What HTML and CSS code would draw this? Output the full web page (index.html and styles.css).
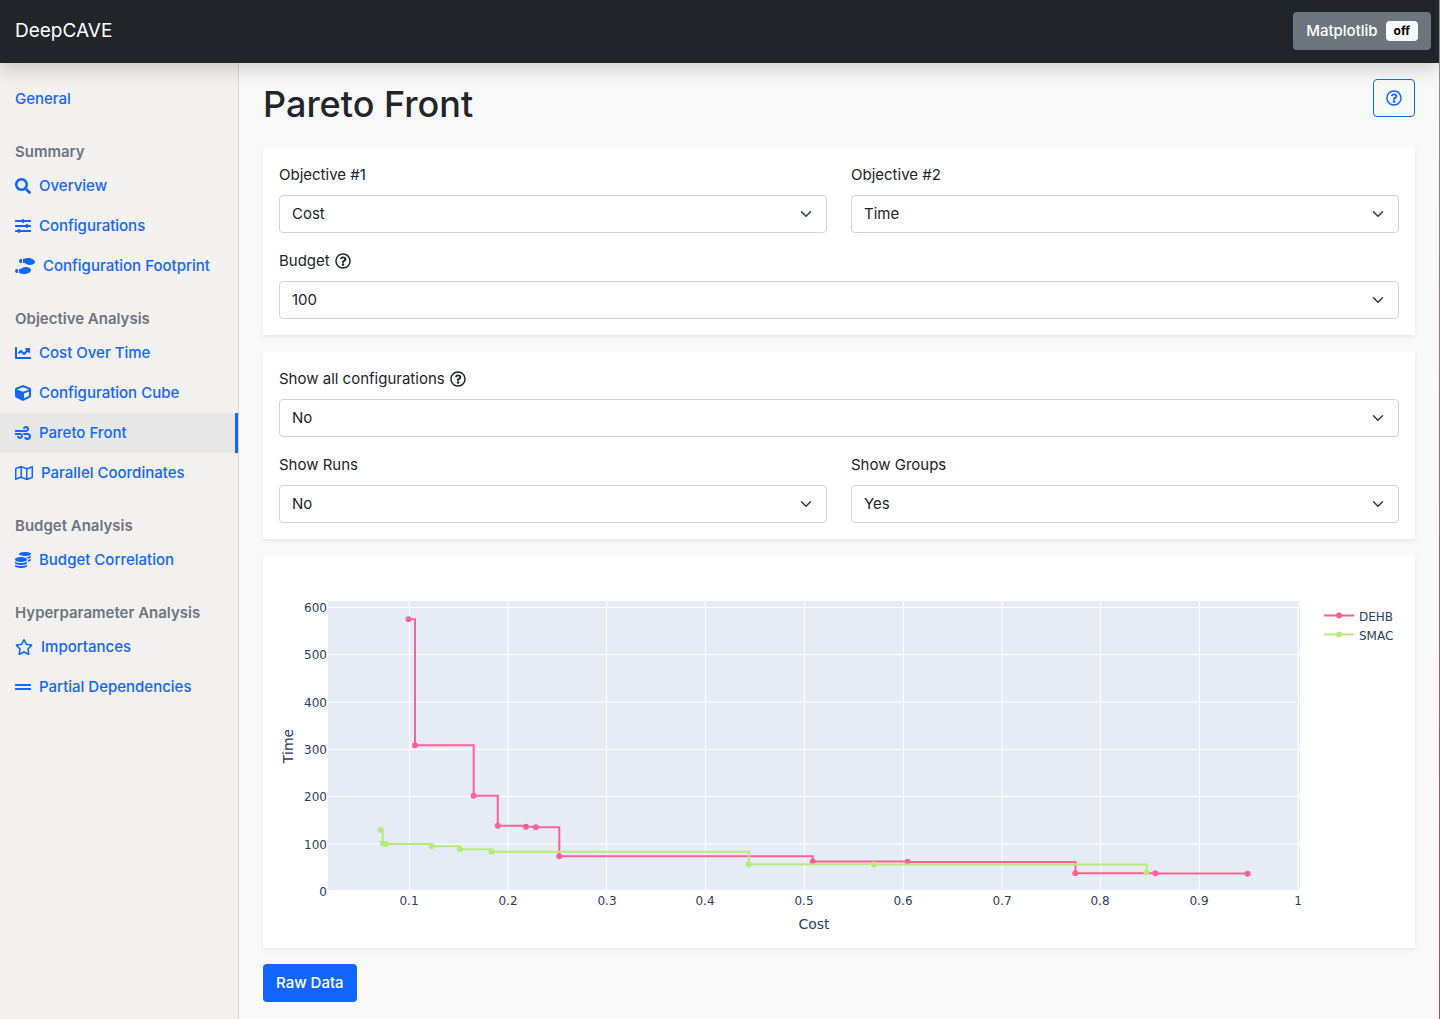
FILE: index.html
```html
<!DOCTYPE html>
<html lang="en">
<head>
<meta charset="utf-8">
<title>DeepCAVE</title>
<meta name="viewport" content="width=device-width, initial-scale=1">
<link rel="stylesheet" href="styles.css">
</head>
<body>
<svg class="sprite" aria-hidden="true">
  <symbol id="i-search" viewBox="0 0 512 512"><path d="M505 442.7L405.3 343c-4.5-4.5-10.6-7-17-7H372c27.6-35.3 44-79.7 44-128C416 93.1 322.9 0 208 0S0 93.1 0 208s93.1 208 208 208c48.3 0 92.7-16.4 128-44v16.3c0 6.4 2.5 12.5 7 17l99.7 99.7c9.4 9.4 24.6 9.4 33.9 0l28.3-28.3c9.4-9.4 9.4-24.6.1-34zM208 336c-70.7 0-128-57.2-128-128 0-70.7 57.2-128 128-128 70.7 0 128 57.2 128 128 0 70.7-57.2 128-128 128z"/></symbol>
  <symbol id="i-sliders" viewBox="0 0 512 512"><path d="M496 384H160v-16c0-8.8-7.2-16-16-16h-32c-8.8 0-16 7.2-16 16v16H16c-8.8 0-16 7.2-16 16v32c0 8.8 7.2 16 16 16h80v16c0 8.8 7.2 16 16 16h32c8.8 0 16-7.2 16-16v-16h336c8.8 0 16-7.2 16-16v-32c0-8.8-7.2-16-16-16zm0-160h-80v-16c0-8.8-7.2-16-16-16h-32c-8.8 0-16 7.2-16 16v16H16c-8.8 0-16 7.2-16 16v32c0 8.8 7.2 16 16 16h336v16c0 8.8 7.2 16 16 16h32c8.8 0 16-7.2 16-16v-16h80c8.8 0 16-7.2 16-16v-32c0-8.8-7.2-16-16-16zm0-160H288V48c0-8.8-7.2-16-16-16h-32c-8.8 0-16 7.2-16 16v16H16C7.2 64 0 71.2 0 80v32c0 8.8 7.2 16 16 16h208v16c0 8.8 7.2 16 16 16h32c8.8 0 16-7.2 16-16v-16h208c8.8 0 16-7.2 16-16V80c0-8.8-7.2-16-16-16z"/></symbol>
  <symbol id="i-shoe-prints" viewBox="0 0 640 512"><path d="M192 160h32V32h-32c-35.35 0-64 28.65-64 64s28.65 64 64 64zM0 416c0 35.35 28.65 64 64 64h32V352H64c-35.35 0-64 28.65-64 64zm337.46-128c-34.91 0-76.16 13.12-104.73 32-24.79 16.38-44.52 32-104.73 32v128l57.53 15.97c26.21 7.28 53.01 13.12 80.31 15.05 32.69 2.31 65.6.67 97.58-6.2C472.9 481.3 512 429.22 512 384c0-64-84.18-96-174.54-96zM491.42 7.25C459.44.32 426.53-1.33 393.84.99c-27.3 1.93-54.1 7.77-80.31 15.04L256 32v128c60.2 0 79.94 15.62 104.73 32 28.57 18.88 69.82 32 104.73 32C555.82 224 640 192 640 128c0-45.22-39.1-97.3-148.58-120.75z"/></symbol>
  <symbol id="i-chart-line" viewBox="0 0 512 512"><path d="M496 384H64V80c0-8.84-7.16-16-16-16H16C7.16 64 0 71.16 0 80v336c0 17.67 14.33 32 32 32h464c8.84 0 16-7.16 16-16v-32c0-8.84-7.16-16-16-16zM464 96H345.94c-21.38 0-32.09 25.85-16.97 40.97l32.4 32.4L288 242.75l-73.37-73.37c-12.5-12.5-32.76-12.5-45.25 0l-68.69 68.69c-6.25 6.25-6.25 16.38 0 22.63l22.62 22.62c6.25 6.25 16.38 6.25 22.63 0L192 237.25l73.37 73.37c12.5 12.5 32.76 12.5 45.25 0l96-96 32.4 32.4c15.12 15.12 40.97 4.41 40.97-16.97V112c.01-8.84-7.15-16-15.99-16z"/></symbol>
  <symbol id="i-cube" viewBox="0 0 512 512"><path d="M239.1 6.3l-208 78c-18.7 7-31.1 25-31.1 45v225.1c0 18.2 10.3 34.8 26.5 42.9l208 104c13.5 6.8 29.4 6.8 42.9 0l208-104c16.3-8.1 26.5-24.8 26.5-42.9V129.3c0-20-12.4-37.9-31.1-44.9l-208-78C262 2.2 250 2.2 239.1 6.3zM256 68.4l192 72v1.1l-192 78-192-78v-1.1l192-72zm32 356V275.5l160-65v133.9l-160 80z"/></symbol>
  <symbol id="i-wind" viewBox="0 0 512 512"><path d="M156.7 256H16c-8.8 0-16 7.2-16 16v32c0 8.8 7.2 16 16 16h142.2c15.9 0 30.8 10.9 33.4 26.6 3.3 20-12.1 37.4-31.6 37.4-14.1 0-26.1-9.2-30.4-21.9-2.1-6.3-8.6-10.1-15.2-10.1H81.6c-9.8 0-17.7 8.8-15.9 18.4 8.6 44.1 47.6 77.6 94.2 77.6 57.1 0 102.7-50.1 95.2-108.6C249 291 205.4 256 156.7 256zM16 224h336c59.7 0 106.8-54.8 93.8-116.7-7.6-36.2-36.9-65.5-73.1-73.1-55.4-11.6-105.1 24.9-114.9 75.5-1.9 9.6 6.1 18.3 15.8 18.3h32.8c6.7 0 13.1-3.8 15.2-10.1C325.9 105.2 337.9 96 352 96c19.4 0 34.9 17.4 31.6 37.4-2.6 15.7-17.4 26.6-33.4 26.6H16c-8.8 0-16 7.2-16 16v32c0 8.8 7.2 16 16 16zm384 32H243.7c19.3 16.6 33.2 38.8 39.8 64H400c26.5 0 48 21.5 48 48s-21.5 48-48 48c-17.9 0-33.3-9.9-41.6-24.4-2.9-5-8.7-7.6-14.5-7.6h-33.8c-10.9 0-19 10.8-15.3 21.1 17.8 50.6 70.5 84.8 129.4 72.3 41.2-8.7 75.1-41.6 84.7-82.7C526 321.5 470.5 256 400 256z"/></symbol>
  <symbol id="i-map" viewBox="0 0 576 512"><path d="M560.02 32c-1.96 0-3.98.37-5.96 1.16L384.01 96H384L212 35.28A64.252 64.252 0 0 0 191.76 32c-6.69 0-13.37 1.05-19.81 3.14L20.12 87.95A32.006 32.006 0 0 0 0 117.66v346.32C0 473.17 7.53 480 15.99 480c1.96 0 3.97-.37 5.96-1.16L192 416l172 60.71a63.98 63.98 0 0 0 40.05.15l151.83-52.81A31.996 31.996 0 0 0 576 394.34V48.02c0-9.19-7.53-16.02-15.98-16.02zM224 90.42l128 45.19v285.97l-128-45.19V90.42zM48 418.05V129.07l128-44.53v286.2l-.64.23L48 418.05zm480-35.13l-128 44.53V141.26l.64-.24L528 93.95v288.97z"/></symbol>
  <symbol id="i-coins" viewBox="0 0 512 512"><path d="M0 405.3V448c0 35.3 86 64 192 64s192-28.7 192-64v-42.7C342.7 434.4 267.2 448 192 448S41.3 434.4 0 405.3zM320 128c106 0 192-28.7 192-64S426 0 320 0 128 28.7 128 64s86 64 192 64zM0 300.4V352c0 35.3 86 64 192 64s192-28.7 192-64v-51.6c-41.3 34-116.9 51.6-192 51.6S41.3 334.4 0 300.4zm416 11c57.3-11.1 96-31.7 96-55.4v-42.7c-23.2 16.4-57.3 27.6-96 34.5v63.6zM192 160C86 160 0 195.8 0 240s86 80 192 80 192-35.8 192-80-86-80-192-80zm219.3 56.3c60-10.8 100.7-32 100.7-56.3v-42.7c-35.5 25.1-96.5 38.6-160.7 41.8 29.5 14.3 51.2 33.5 60 57.2z"/></symbol>
  <symbol id="i-star" viewBox="0 0 576 512"><path d="M528.1 171.5L382 150.2 316.7 17.8c-11.7-23.6-45.6-23.9-57.4 0L194 150.2 47.9 171.5c-26.2 3.8-36.7 36.1-17.7 54.6l105.7 103-25 145.5c-4.5 26.3 23.2 46 46.4 33.7L288 439.6l130.7 68.7c23.2 12.2 50.9-7.4 46.4-33.7l-25-145.5 105.7-103c19-18.5 8.5-50.8-17.7-54.6zM388.6 312.3l23.7 138.4L288 385.4l-124.3 65.3 23.7-138.4-100.6-98 139-20.2 62.2-126 62.2 126 139 20.2-100.6 98z"/></symbol>
  <symbol id="i-grip-lines" viewBox="0 0 512 512"><path d="M496 288H16c-8.8 0-16 7.2-16 16v32c0 8.8 7.2 16 16 16h480c8.8 0 16-7.2 16-16v-32c0-8.8-7.2-16-16-16zm0-128H16c-8.8 0-16 7.2-16 16v32c0 8.8 7.2 16 16 16h480c8.8 0 16-7.2 16-16v-32c0-8.8-7.2-16-16-16z"/></symbol>
  <symbol id="i-question" viewBox="0 0 512 512"><path d="M256 8C119.043 8 8 119.083 8 256c0 136.997 111.043 248 248 248s248-111.003 248-248C504 119.083 392.957 8 256 8zm0 448c-110.532 0-200-89.431-200-200 0-110.495 89.472-200 200-200 110.491 0 200 89.471 200 200 0 110.53-89.431 200-200 200zm107.244-255.2c0 67.052-72.421 68.084-72.421 92.863V300c0 6.627-5.373 12-12 12h-45.647c-6.627 0-12-5.373-12-12v-8.659c0-35.745 27.1-50.034 47.579-61.516 17.561-9.845 28.324-16.541 28.324-29.579 0-17.246-21.999-28.693-39.784-28.693-23.189 0-33.894 10.977-48.942 29.969-4.057 5.12-11.46 6.071-16.666 2.124l-27.824-21.098c-5.107-3.872-6.251-11.066-2.644-16.363C184.846 131.491 214.94 112 261.794 112c49.071 0 101.45 38.304 101.45 88.8zM298 368c0 23.159-18.841 42-42 42s-42-18.841-42-42 18.841-42 42-42 42 18.841 42 42z"/></symbol>
</svg>

<header class="topbar">
  <a class="brand" href="#">DeepCAVE</a>
  <button class="btn btn-secondary" type="button">Matplotlib <span class="badge">off</span></button>
</header>

<div class="shell">
  <nav class="sidebar" aria-label="Plugins">
    <a class="nav-link" href="#">General</a>

    <h2 class="nav-heading">Summary</h2>
    <a class="nav-link" href="#"><svg class="icon"><use href="#i-search"/></svg>Overview</a>
    <a class="nav-link" href="#"><svg class="icon"><use href="#i-sliders"/></svg>Configurations</a>
    <a class="nav-link" href="#"><svg class="icon icon-xwide"><use href="#i-shoe-prints"/></svg>Configuration Footprint</a>

    <h2 class="nav-heading">Objective Analysis</h2>
    <a class="nav-link" href="#"><svg class="icon"><use href="#i-chart-line"/></svg>Cost Over Time</a>
    <a class="nav-link" href="#"><svg class="icon"><use href="#i-cube"/></svg>Configuration Cube</a>
    <a class="nav-link active" href="#" aria-current="page"><svg class="icon"><use href="#i-wind"/></svg>Pareto Front</a>
    <a class="nav-link" href="#"><svg class="icon icon-wide"><use href="#i-map"/></svg>Parallel Coordinates</a>

    <h2 class="nav-heading">Budget Analysis</h2>
    <a class="nav-link" href="#"><svg class="icon"><use href="#i-coins"/></svg>Budget Correlation</a>

    <h2 class="nav-heading">Hyperparameter Analysis</h2>
    <a class="nav-link" href="#"><svg class="icon icon-wide"><use href="#i-star"/></svg>Importances</a>
    <a class="nav-link" href="#"><svg class="icon"><use href="#i-grip-lines"/></svg>Partial Dependencies</a>
  </nav>

  <main class="content">
    <div class="title-row">
      <h1>Pareto Front</h1>
      <button class="btn btn-outline" type="button" aria-label="Help"><svg class="icon"><use href="#i-question"/></svg></button>
    </div>

    <section class="card form-grid">
      <div class="field">
        <label for="objective1">Objective #1</label>
        <select id="objective1"><option>Cost</option><option>Time</option></select>
      </div>
      <div class="field">
        <label for="objective2">Objective #2</label>
        <select id="objective2"><option>Time</option><option>Cost</option></select>
      </div>
      <div class="field full">
        <label for="budget">Budget <svg class="icon"><use href="#i-question"/></svg></label>
        <select id="budget"><option>100</option></select>
      </div>
    </section>

    <section class="card form-grid">
      <div class="field full">
        <label for="show-all">Show all configurations <svg class="icon"><use href="#i-question"/></svg></label>
        <select id="show-all"><option>No</option><option>Yes</option></select>
      </div>
      <div class="field">
        <label for="show-runs">Show Runs</label>
        <select id="show-runs"><option>No</option><option>Yes</option></select>
      </div>
      <div class="field">
        <label for="show-groups">Show Groups</label>
        <select id="show-groups"><option>Yes</option><option>No</option></select>
      </div>
    </section>

    <section class="card chart-card">
      <svg class="chart" viewBox="263 555 1152 393" role="img" aria-label="Pareto front of Cost and Time">
        <rect class="plot" x="328" y="601" width="972" height="290"/>
        <path class="grid" d="M409.5 601V891M508 601V891M606.5 601V891M705.5 601V891M804.5 601V891M903.5 601V891M1002 601V891M1100.5 601V891M1199.5 601V891M1298.5 601V891M328 607.5H1300M328 654.5H1300M328 702H1300M328 749.5H1300M328 796.5H1300M328 844H1300"/>
        <path class="grid" d="M328 890.5H1300"/>

        <g class="series dehb">
          <path d="M408.5 619.2H415V745.3H473.7V795.7H497.8V825.8H526V826.8H536V827.2H559.3V856.3H812.7V861.5H907.5V862H1075.5V873.2H1155.3V873.5H1247.5"/>
          <circle cx="408.5" cy="619.2" r="3"/><circle cx="415" cy="745.3" r="3"/><circle cx="473.7" cy="795.7" r="3"/><circle cx="497.8" cy="825.8" r="3"/><circle cx="526" cy="826.8" r="3"/><circle cx="535.8" cy="827.2" r="3"/><circle cx="559.3" cy="856.3" r="3"/><circle cx="812.7" cy="861.5" r="3"/><circle cx="907.5" cy="861.7" r="3"/><circle cx="1075.3" cy="873.2" r="3"/><circle cx="1155.3" cy="873.2" r="3"/><circle cx="1247.6" cy="873.7" r="3"/>
        </g>
        <g class="series smac">
          <path d="M380.6 830H382.8V843.3H385.7V844H431.5V846.3H460V849.3H491.5V851.8H748.8V864.2H874V864.6H1146.8V872.6"/>
          <circle cx="380.6" cy="830" r="3"/><circle cx="382.8" cy="843.3" r="3"/><circle cx="385.7" cy="844" r="3"/><circle cx="431.5" cy="846.3" r="3"/><circle cx="459.8" cy="849.3" r="3"/><circle cx="491.5" cy="851.8" r="3"/><circle cx="748.6" cy="864.2" r="3"/><circle cx="874" cy="864.6" r="3"/><circle cx="1146.6" cy="872.6" r="3"/>
        </g>

        <g class="tick end">
          <text x="327" y="612">600</text><text x="327" y="659">500</text><text x="327" y="707">400</text><text x="327" y="754">300</text><text x="327" y="801">200</text><text x="327" y="849">100</text><text x="327" y="896">0</text>
        </g>
        <g class="tick middle">
          <text x="409" y="905">0.1</text><text x="508" y="905">0.2</text><text x="607" y="905">0.3</text><text x="705" y="905">0.4</text><text x="804" y="905">0.5</text><text x="903" y="905">0.6</text><text x="1002" y="905">0.7</text><text x="1100" y="905">0.8</text><text x="1199" y="905">0.9</text><text x="1298" y="905">1</text>
        </g>
        <text class="axis-title" x="814" y="929">Cost</text>
        <text class="axis-title" transform="translate(293 746) rotate(-90)">Time</text>

        <g class="series dehb"><path d="M1324 615.5H1354"/><circle cx="1339" cy="615.5" r="3"/></g>
        <g class="series smac"><path d="M1324 634.5H1354"/><circle cx="1339" cy="634.5" r="3"/></g>
        <g class="tick"><text x="1359" y="621">DEHB</text><text x="1359" y="640">SMAC</text></g>
      </svg>
    </section>

    <button class="btn btn-primary" type="button">Raw Data</button>
  </main>
</div>
</body>
</html>
```
FILE: styles.css
```css
* {
  box-sizing: border-box;
}

html {
  height: 100%;
}

body {
  margin: 0;
  min-height: 100%;
  display: flex;
  flex-direction: column;
  background: #f9f9f9;
  color: #212529;
  font-family: Inter, "Liberation Sans", sans-serif;
  font-size: 15px;
  line-height: 24px;
  border-right: 1px solid #8c8c98;
  border-image: linear-gradient(#8c8c98, #96506e) 1;
}

.sprite {
  display: none;
}

.icon {
  flex: none;
  width: 16px;
  height: 16px;
  fill: currentColor;
}

.icon-wide {
  width: 18px;
}

.icon-xwide {
  width: 20px;
}

.topbar {
  position: relative;
  z-index: 1;
  display: flex;
  align-items: center;
  justify-content: space-between;
  padding: 12px 8px 13px 15px;
  background: #212529;
  box-shadow: 0 8px 16px rgba(0, 0, 0, 0.15);
}

.brand {
  color: #fff;
  font-size: 19px;
  text-decoration: none;
}

.btn {
  display: inline-flex;
  align-items: center;
  gap: 8px;
  height: 38px;
  padding: 0 12px;
  border: 1px solid transparent;
  border-radius: 4px;
  color: #fff;
  font: inherit;
  font-weight: 500;
  cursor: pointer;
}

.btn-secondary {
  background: #6c757d;
}

.btn-primary {
  background: #1266ff;
}

.btn-outline {
  background: transparent;
  border-color: #1266ff;
  color: #1266ff;
}

.badge {
  padding: 4px 8px;
  border-radius: 4px;
  background: #f8f9fa;
  color: #000;
  font-size: 12px;
  font-weight: 700;
  line-height: 12px;
}

.shell {
  flex: 1;
  display: flex;
}

.sidebar {
  flex: 0 0 239px;
  padding-top: 16px;
  background: #f3f1f0;
  border-right: 1px solid #d6d6d6;
  font-weight: 500;
}

.nav-heading {
  margin: 21px 0 2px;
  padding: 0 15px;
  color: #6c757d;
  font-size: 15px;
  font-weight: 600;
}

.nav-link {
  display: flex;
  align-items: center;
  gap: 8px;
  height: 40px;
  padding: 0 15px;
  color: #1266ff;
  text-decoration: none;
}

.nav-link.active {
  background: #e7e7e7;
  border-right: 3px solid #1266ff;
}

.content {
  flex: 1;
  min-width: 0;
  padding: 16px 24px;
}

.title-row {
  display: flex;
  align-items: flex-start;
  justify-content: space-between;
  margin-bottom: 18px;
}

h1 {
  margin: 0;
  font-size: 36px;
  font-weight: 500;
  line-height: 50px;
}

.card {
  margin-bottom: 16px;
  background: #fff;
  box-shadow: 0 2px 4px rgba(0, 0, 0, 0.075);
}

.form-grid {
  display: grid;
  grid-template-columns: 1fr 1fr;
  gap: 16px 24px;
  padding: 16px;
}

.full {
  grid-column: 1 / -1;
}

.field label {
  display: flex;
  align-items: center;
  gap: 5px;
  margin-bottom: 8px;
}

select {
  display: block;
  width: 100%;
  height: 38px;
  padding: 0 36px 0 12px;
  border: 1px solid #ced4da;
  border-radius: 4px;
  appearance: none;
  background: #fff url("data:image/svg+xml,%3Csvg xmlns='http://www.w3.org/2000/svg' viewBox='0 0 16 16'%3E%3Cpath fill='none' stroke='%23343a40' stroke-linecap='round' stroke-linejoin='round' stroke-width='2' d='M2 5l6 6 6-6'/%3E%3C/svg%3E") no-repeat right 14px center / 12px 12px;
  color: #212529;
  font: inherit;
}

.chart {
  display: block;
  width: 100%;
  height: auto;
  font-family: "DejaVu Sans", sans-serif;
}

.plot {
  fill: #e5ecf6;
}

.grid {
  stroke: #fff;
  fill: none;
}

.series path {
  fill: none;
  stroke-width: 2;
}

.dehb {
  stroke: #fe6196;
  fill: #fe6196;
}

.smac {
  stroke: #b7ea7d;
  fill: #b7ea7d;
}

.series circle {
  stroke: none;
}

.tick,
.axis-title {
  fill: #2a3f5f;
  font-size: 12px;
}

.end {
  text-anchor: end;
}

.middle,
.axis-title {
  text-anchor: middle;
}

.axis-title {
  font-size: 14px;
}
```
